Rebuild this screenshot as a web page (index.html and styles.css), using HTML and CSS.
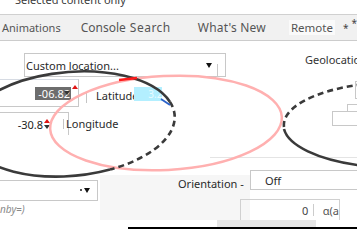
FILE: index.html
```html
<!DOCTYPE html>
<html>
<head>
<meta charset="utf-8">
<link rel="stylesheet" href="styles.css">
</head>
<body>
<div class="page">
  <div class="topbar"><span class="topbar-text">Selected content only</span></div>
  <div class="tabs">
    <span class="tab tab-anim">Animations</span>
    <span class="tab tab-console">Console</span>
    <span class="tab tab-search">Search</span>
    <span class="tab tab-new">What's New</span>
    <span class="tab tab-remote">Remote</span>
    <span class="tab-more">*</span>
    <span class="tab-more tab-more-hi">*</span>
  </div>
  <div class="main">
    <div class="left-col">
      <div class="select select-location">
        <span class="select-text">Custom location...</span>
        <span class="arrow"></span>
        <span class="select-sep"></span>
      </div>
      <div class="field-row field-lat">
        <div class="num-input num-lat">
          <span class="num-sel">-06.82</span>
          <span class="spin"><span class="spin-up"></span><span class="spin-down"></span></span>
        </div>
        <span class="vsep"></span>
        <span class="label">Latitude</span>
        <span class="hl">3.2</span>
      </div>
      <div class="field-row field-lng">
        <div class="num-input num-lng">
          <span class="num-val">-30.8</span>
          <span class="spin"><span class="spin-up"></span><span class="spin-down"></span></span>
        </div>
        <span class="vsep"></span>
        <span class="label">Longitude</span>
      </div>
    </div>
    <div class="right-col">
      <span class="section-title">Geolocation</span>
      <span class="rbox rbox-1"></span>
      <span class="rbox rbox-2"></span>
      <span class="rbox rbox-3"></span>
      <span class="rdivider"></span>
    </div>
  </div>
  <div class="orient">
    <div class="o-left">
      <div class="select select-small"><span class="dot"></span><span class="arrow arrow-stem"></span></div>
      <span class="hint">nby=)</span>
    </div>
    <div class="o-mid">
      <span class="label">Orientation -</span>
    </div>
    <div class="o-right">
      <div class="select select-off"><span class="select-text">Off</span></div>
      <div class="angle-box"><span class="angle-val">0</span><span class="angle-sep"></span><span class="angle-unit">α(a</span></div>
    </div>
  </div>
  <div class="strip"><span class="strip-gray"></span></div>
  <div class="baseline"></div>

  <svg class="overlay" width="357" height="234" viewBox="0 0 357 234">
    <g transform="rotate(-3 166 123)">
      <ellipse cx="166" cy="123" rx="116" ry="47" fill="none" stroke="#ffb0b0" stroke-width="2.5"/>
    </g>
    <g transform="rotate(-5 70 124)" fill="none" stroke="#3a3a3a" stroke-width="2.6">
      <path d="M -35 124 A 105 52 0 0 1 171.4 110.5"/>
      <path d="M 171.4 110.5 A 105 52 0 0 1 105.9 172.9" stroke-dasharray="6 4"/>
      <path d="M 105.9 172.9 A 105 52 0 0 1 -35 124"/>
    </g>
    <path d="M 119 80 L 137 78" stroke="#ff1a1a" stroke-width="2.5" fill="none"/>
    <path d="M 161 99 L 170 105" stroke="#2a62c9" stroke-width="1.8" fill="none"/>
    <g fill="none" stroke="#3a3a3a" stroke-width="2.6">
      <path d="M 284 127 A 116 43 0 0 1 360.3 84.6" stroke-dasharray="6 4"/>
      <path d="M 284 129 A 116 43 0 0 0 360.3 165.4"/>
    </g>
  </svg>
</div>
</body>
</html>
```
FILE: styles.css
```css
* { box-sizing: border-box; }
html, body { margin: 0; padding: 0; }
body {
  background: #ffffff;
  font-family: "Noto Sans", "Open Sans", sans-serif;
  font-size: 11px;
  color: #333333;
}
.page {
  position: relative;
  width: 357px;
  height: 234px;
  overflow: hidden;
  background: #ffffff;
}
.topbar {
  height: 15px;
  overflow: hidden;
  padding-left: 15px;
  border-bottom: 1px solid #d0d0d0;
}
.topbar-text {
  display: block;
  margin-top: -7px;
  font-size: 11px;
  line-height: 13px;
  color: #3a3a3a;
}
.tabs {
  height: 26px;
  display: flex;
  align-items: center;
  background: #f1f1f1;
  border-bottom: 1px solid #cccccc;
  color: #555555;
  font-size: 11px;
  white-space: nowrap;
}
.tab-anim { margin-left: 2px; }
.tab-console { margin-left: 20px; font-size: 12px; }
.tab-search { margin-left: 4px; font-size: 12px; letter-spacing: 0.5px; }
.tab-new { margin-left: 27px; font-size: 12px; letter-spacing: 0.2px; }
.tab-remote { margin-left: 23px; padding: 0 2px; background: #fafafa; font-size: 11.5px; }
.tab-more { margin-left: 8px; font-size: 10px; color: #444; align-self: center; }
.tab-more-hi { margin-left: 3px; align-self: flex-start; margin-top: 1px; }

.main {
  display: grid;
  grid-template-columns: 240px 1fr;
  padding-top: 12px;
}
.left-col {
  display: flex;
  flex-direction: column;
}
.select {
  position: relative;
  display: flex;
  align-items: center;
  border: 1px solid #c8c8c8;
  background: #fff;
}
.select-location {
  margin-left: 24px;
  width: 202px;
  height: 24px;
  padding-left: 1px;
}
.select-text { color: #2a2a2a; font-size: 11px; }
.arrow {
  margin-left: auto;
  margin-right: 5px;
  width: 0;
  height: 0;
  border-left: 3.5px solid transparent;
  border-right: 3.5px solid transparent;
  border-top: 5px solid #111;
}
.select-sep {
  width: 1px;
  height: 12px;
  background: #c8c8c8;
  margin-right: 7px;
  align-self: flex-end;
}
.field-row {
  display: flex;
  align-items: center;
}
.field-lat { margin-top: 2px; height: 28px; }
.field-lng { margin-top: 5px; height: 23px; align-items: flex-start; }
.num-input {
  display: flex;
  align-items: center;
  justify-content: flex-end;
  border: 1px solid #c8c8c8;
  border-left: none;
  height: 100%;
  background: #fff;
}
.num-lat { width: 79px; align-items: flex-start; padding-top: 7px; border-top-color: #d6dbe3; }
.num-lng { width: 69px; padding-right: 18px; border-bottom: none; border-top: 1px solid #c8c8c8; }
.num-sel {
  background: #6d6d6d;
  color: #ffffff;
  padding: 0 1px 0 3px;
  line-height: 13px;
  font-size: 11px;
}
.num-val { color: #222; font-size: 11px; }
.spin {
  display: flex;
  flex-direction: column;
  gap: 2px;
  margin-left: 1px;
}
.spin-up, .spin-down {
  width: 0; height: 0;
  border-left: 3px solid transparent;
  border-right: 3px solid transparent;
}
.spin-up { border-bottom: 4px solid #e01515; }
.spin-down { border-top: 4px solid #333; }
.num-lat .spin { margin-top: -2px; }
.num-lat .spin-down { margin-left: -8px; }
.vsep {
  width: 1px;
  height: 11px;
  background: #c4c4c4;
  margin-left: 7px;
  margin-top: 8px;
}
.field-lng .vsep { margin-left: -6px; margin-top: 7px; height: 10px; }
.label { color: #2a2a2a; font-size: 11px; margin-left: 9px; }
.field-lat .label { margin-top: 4px; }
.field-lng .label { margin-left: 2px; margin-top: 4px; }
.hl {
  background: #b3efff;
  color: #e8fbff;
  margin-left: -4px;
  width: 28px;
  height: 14px;
  margin-top: 2px;
  font-size: 10px;
  text-align: right;
}

.right-col {
  display: flex;
  flex-direction: column;
  align-items: flex-end;
}
.section-title {
  align-self: flex-start;
  margin-left: 65px;
  margin-top: -1px;
  color: #333;
  font-size: 11px;
}
.rbox {
  display: block;
  border: 1px solid #c8c8c8;
  border-right: none;
}
.rbox-1 { width: 12px; height: 18px; margin-top: 14px; }
.rbox-2 { width: 20px; height: 7px; margin-top: 5px; border-bottom: none; }
.rbox-3 { width: 35px; height: 15px; margin-top: 0; }
.rdivider {
  align-self: stretch;
  margin-top: 31px;
  height: 1px;
  background: #e4e4e4;
  margin-left: -30px;
}

.orient {
  display: flex;
  margin-top: 12px;
  height: 50px;
}
.o-left {
  width: 100px;
  padding-top: 10px;
  display: flex;
  flex-direction: column;
}
.select-small {
  width: 98px;
  height: 21px;
  border-left: none;
}
.dot {
  position: absolute;
  left: 80px;
  top: 8px;
  width: 2px;
  height: 2px;
  background: #555;
}
.arrow-stem { margin-right: 7px; }
.hint {
  color: #8a8a8a;
  font-style: italic;
  font-size: 10px;
  margin-top: 1px;
}
.o-mid {
  width: 150px;
  background: #f6f6f6;
  margin-top: 5px;
}
.o-mid .label { display: block; margin-left: 78px; margin-top: 1px; }
.o-right {
  display: flex;
  flex-direction: column;
}
.select-off {
  width: 107px;
  height: 21px;
  border-right: none;
  padding-left: 14px;
}
.angle-box {
  display: flex;
  align-items: center;
  margin-left: -10px;
  margin-top: 9px;
  width: 100px;
  height: 22px;
  padding-left: 61px;
  border: 1px solid #d0d0d0;
  border-bottom: none;
}
.angle-val { width: 24px; font-size: 11px; color: #444; }
.angle-sep { flex: none; width: 1px; height: 12px; background: #ccc; }
.angle-unit { flex: none; font-size: 11px; color: #555; margin-left: 9px; }

.strip {
  height: 7px;
  display: flex;
}
.strip-gray {
  margin-left: 217px;
  width: 99px;
  height: 7px;
  background: #e6e6e6;
}
.baseline {
  margin-left: 128px;
  height: 2px;
  background: #000;
}
.overlay {
  position: absolute;
  left: 0;
  top: 0;
  pointer-events: none;
}
```
